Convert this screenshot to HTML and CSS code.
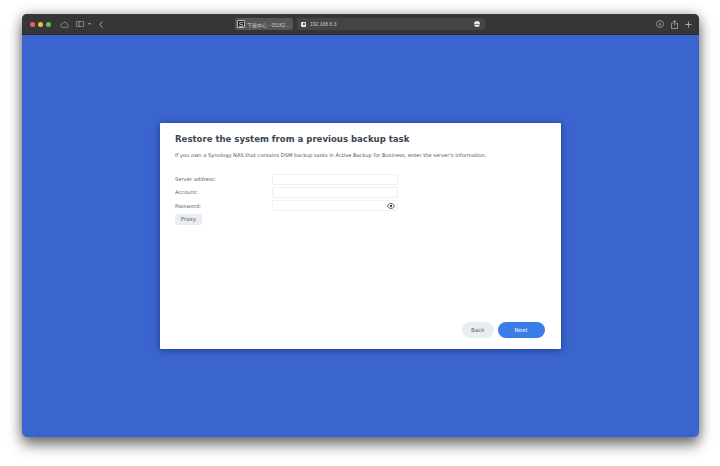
FILE: index.html
```html
<!DOCTYPE html>
<html lang="en">
<head>
<meta charset="utf-8">
<title>Restore the system</title>
<link rel="stylesheet" href="styles.css">
</head>
<body>
<div class="window">
  <header class="toolbar">
    <div class="lights"><i class="light red"></i><i class="light yellow"></i><i class="light green"></i></div>
    <svg class="ico cloud" width="9" height="7" viewBox="0 0 11 8"><path d="M2.700 7.500h6a1.800 1.800 0 0 0 .3-3.500A3.200 3.200 0 0 0 3.200 2.600 2.500 2.500 0 0 0 2.700 7.500z" fill="none" stroke="#9b9b9b" stroke-width=".9"/></svg>
    <svg class="ico sidebar" width="8" height="6" viewBox="0 0 8 6"><rect x=".4" y=".4" width="7.200" height="5.200" rx="1" fill="none" stroke="#a5a5a5" stroke-width=".8"/><path d="M3 .4v5.200" stroke="#a5a5a5" stroke-width=".8"/></svg>
    <svg class="ico caret" width="3" height="2" viewBox="0 0 3 2"><path d="M0 0h3L1.500 2z" fill="#a5a5a5"/></svg>
    <svg class="ico back" width="4" height="7" viewBox="0 0 4 7"><path d="M3.500.5.700 3.500l2.800 3" fill="none" stroke="#b5b5b5" stroke-width=".9"/></svg>
    <div class="tabs">
      <div class="tab tab-active">
        <span class="favicon-s">S</span><span class="tab-text">下載中心 - 05162...</span>
      </div>
      <div class="tab tab-url">
        <span class="favicon-box"><i></i></span><span class="tab-text">192.168.6.3</span>
        <span class="more"><i></i></span>
      </div>
    </div>
    <div class="actions">
      <svg width="8" height="8" viewBox="0 0 8 8"><circle cx="4" cy="4" r="3.500" fill="none" stroke="#a0a0a0" stroke-width=".8"/><path d="M4 1.800v3.600M2.600 4.100 4 5.500l1.400-1.400" fill="none" stroke="#a0a0a0" stroke-width=".7"/></svg>
      <svg width="7" height="9" viewBox="0 0 7 9"><path d="M2.200 3.200H.5v5.300h6V3.200H4.800M3.500 5.500V.7M2 2 3.500.6 5 2" fill="none" stroke="#a8a8a8" stroke-width=".8"/></svg>
      <svg width="7" height="7" viewBox="0 0 7 7"><path d="M3.500.5v6M.5 3.500h6" stroke="#a8a8a8" stroke-width="1"/></svg>
    </div>
  </header>
  <main class="stage">
    <section class="dialog">
      <h1 class="title">Restore the system from a previous backup task</h1>
      <p class="desc">If you own a Synology NAS that contains DSM backup tasks in Active Backup for Business, enter the server's information.</p>
      <form class="form">
        <label class="label">Server address:</label><div class="input"></div>
        <label class="label">Account:</label><div class="input"></div>
        <label class="label">Password:</label>
        <div class="input input-pw">
          <svg width="8" height="6" viewBox="0 0 8 6"><path d="M.4 3C1.400 1.300 2.600.5 4 .5S6.600 1.300 7.600 3C6.600 4.700 5.400 5.500 4 5.500S1.400 4.700.4 3z" fill="none" stroke="#3a434e" stroke-width=".8"/><circle cx="4" cy="3" r="1.200" fill="#3a434e"/></svg>
        </div>
      </form>
      <div class="proxy">Proxy</div>
      <footer class="footer">
        <div class="btn btn-back">Back</div>
        <div class="btn btn-next">Next</div>
      </footer>
    </section>
  </main>
</div>
</body>
</html>
```

FILE: styles.css
```css
* { box-sizing: border-box; }
html, body { margin: 0; height: 100%; background: #fff; overflow: hidden; }
body { padding: 14px 21px 29px 22px; font-family: "DejaVu Sans", sans-serif; }
.window {
  height: 423px;
  display: flex;
  flex-direction: column;
  border-radius: 5px;
  overflow: hidden;
  box-shadow: 0 8px 14px rgba(0,0,0,.5), 0 0 12px rgba(0,0,0,.28);
  background: #3a65ce;
}
.toolbar {
  height: 21px;
  flex: none;
  display: flex;
  align-items: center;
  background: #363636;
  border-bottom: 1px solid #2a2a2a;
}
.lights { display: flex; gap: 3px; margin-left: 8px; }
.light { width: 5px; height: 5px; border-radius: 50%; display: block; }
.red { background: #ee5f57; }
.yellow { background: #f4bd3f; }
.green { background: #5fc454; }
.ico { flex: none; display: block; }
.cloud { margin-left: 9px; }
.sidebar { margin-left: 7px; }
.caret { margin-left: 4px; }
.back { margin-left: 8px; }
.tabs { display: flex; gap: 4px; margin-left: 132px; width: 250px; height: 12px; }
.tab { display: flex; align-items: center; height: 12px; border-radius: 2px; color: #c4c4c4; font-family: "Liberation Sans", "Noto Sans CJK TC", sans-serif; font-size: 5px; }
.tab-active { width: 58px; flex: none; background: #565656; padding-left: 2px; }
.tab-url { flex: 1; background: #454545; padding-left: 4px; }
.tab-text { white-space: nowrap; margin-left: 2px; }
.favicon-s { width: 8px; height: 8px; border-radius: 1px; background: #1c1c1c; color: #eee; font-size: 7px; line-height: 7px; text-align: center; border: 1px solid #bbb; display: block; flex: none; }
.favicon-box { width: 5px; height: 5px; border-radius: 1px; background: #e8e8e8; display: flex; align-items: center; justify-content: center; }
.favicon-box i { width: 2px; height: 2px; background: #555; display: block; }
.tab-url .tab-text { margin-left: 4px; }
.more { margin-left: auto; margin-right: 5px; width: 6px; height: 6px; border-radius: 50%; background: #e5e5e5; display: flex; align-items: center; }
.more i { width: 100%; height: 1px; background: #888; display: block; }
.actions { margin-left: auto; margin-right: 7px; display: flex; align-items: center; gap: 7px; }
.stage { flex: 1; display: flex; align-items: center; justify-content: center; padding-right: 1px; }
.dialog {
  width: 401px;
  height: 226px;
  background: #fff;
  border-radius: 1px;
  padding: 11px 16px 11px 15.500px;
  display: flex;
  flex-direction: column;
  box-shadow: 0 1px 7px rgba(15,30,80,.6);
  color: #414b55;
}
.title { margin: 0; font-size: 8.550px; line-height: 11px; font-weight: 700; color: #3c4653; white-space: nowrap; }
.desc { margin: 5.500px 0 0; font-size: 5.140px; line-height: 8px; white-space: nowrap; color: #4c5661; }
.form {
  margin-top: 15px;
  display: grid;
  grid-template-columns: 97px 125.500px;
  grid-auto-rows: 11px;
  row-gap: 2.300px;
  align-items: center;
}
.label { font-size: 5.200px; color: #5a646e; }
.input { height: 11px; background: #fff; border: 1px solid #eef0f3; border-radius: 2px; }
.input-pw { display: flex; align-items: center; justify-content: flex-end; padding-right: 1.500px; }
.proxy { margin-top: 3px; width: 27px; height: 10.500px; background: #e9edf1; border-radius: 2px; font-size: 5.600px; line-height: 10.500px; text-align: center; color: #5a646e; }
.footer { margin-top: auto; display: flex; justify-content: flex-end; gap: 3.500px; }
.btn { height: 16.500px; border-radius: 9px; font-size: 5.600px; line-height: 16.500px; text-align: center; }
.btn-back { width: 32.500px; background: #e9edf1; color: #5a646e; }
.btn-next { width: 47px; background: #3b7de6; color: #fff; }
```
